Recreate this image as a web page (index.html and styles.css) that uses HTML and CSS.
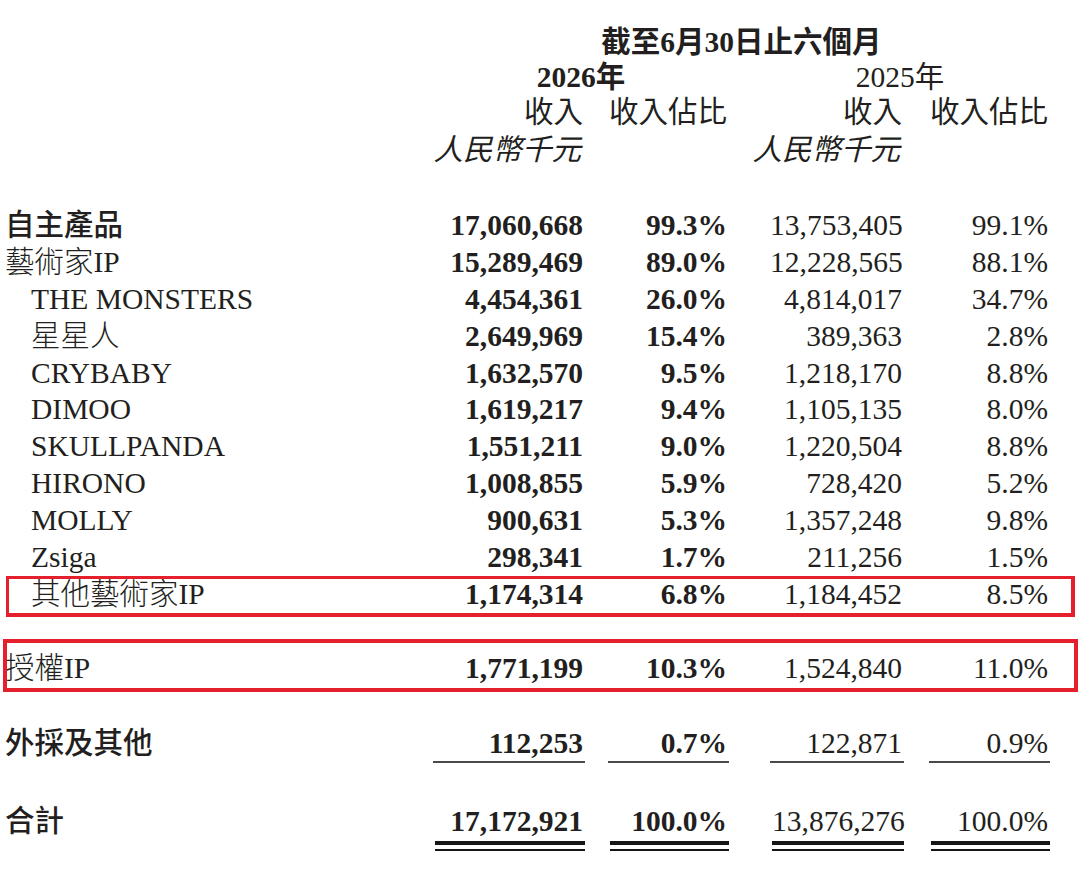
FILE: index.html
```html
<!DOCTYPE html>
<html lang="zh-Hant">
<head>
<meta charset="utf-8">
<title>收入明細</title>
<link rel="stylesheet" href="styles.css">
</head>
<body>
<div class="sheet">
  <div class="head">
    <div class="title">截至6月30日止六個月</div>
    <div class="yr yr26">2026年</div>
    <div class="yr yr25">2025年</div>
    <div class="hc k1">收入</div>
    <div class="hc k2">收入佔比</div>
    <div class="hc k3">收入</div>
    <div class="hc k4">收入佔比</div>
    <div class="unit k1">人民幣千元</div>
    <div class="unit k3">人民幣千元</div>
  </div>

  <div class="group">
    <div class="row"><div class="lab strong">自主產品</div><div class="c k1"><div class="v b">17,060,668</div></div><div class="c k2"><div class="v b">99.3%</div></div><div class="c k3"><div class="v">13,753,405</div></div><div class="c k4"><div class="v">99.1%</div></div></div>
    <div class="row"><div class="lab">藝術家IP</div><div class="c k1"><div class="v b">15,289,469</div></div><div class="c k2"><div class="v b">89.0%</div></div><div class="c k3"><div class="v">12,228,565</div></div><div class="c k4"><div class="v">88.1%</div></div></div>
    <div class="row"><div class="lab sub">THE MONSTERS</div><div class="c k1"><div class="v b">4,454,361</div></div><div class="c k2"><div class="v b">26.0%</div></div><div class="c k3"><div class="v">4,814,017</div></div><div class="c k4"><div class="v">34.7%</div></div></div>
    <div class="row"><div class="lab sub">星星人</div><div class="c k1"><div class="v b">2,649,969</div></div><div class="c k2"><div class="v b">15.4%</div></div><div class="c k3"><div class="v">389,363</div></div><div class="c k4"><div class="v">2.8%</div></div></div>
    <div class="row"><div class="lab sub">CRYBABY</div><div class="c k1"><div class="v b">1,632,570</div></div><div class="c k2"><div class="v b">9.5%</div></div><div class="c k3"><div class="v">1,218,170</div></div><div class="c k4"><div class="v">8.8%</div></div></div>
    <div class="row"><div class="lab sub">DIMOO</div><div class="c k1"><div class="v b">1,619,217</div></div><div class="c k2"><div class="v b">9.4%</div></div><div class="c k3"><div class="v">1,105,135</div></div><div class="c k4"><div class="v">8.0%</div></div></div>
    <div class="row"><div class="lab sub">SKULLPANDA</div><div class="c k1"><div class="v b">1,551,211</div></div><div class="c k2"><div class="v b">9.0%</div></div><div class="c k3"><div class="v">1,220,504</div></div><div class="c k4"><div class="v">8.8%</div></div></div>
    <div class="row"><div class="lab sub">HIRONO</div><div class="c k1"><div class="v b">1,008,855</div></div><div class="c k2"><div class="v b">5.9%</div></div><div class="c k3"><div class="v">728,420</div></div><div class="c k4"><div class="v">5.2%</div></div></div>
    <div class="row"><div class="lab sub">MOLLY</div><div class="c k1"><div class="v b">900,631</div></div><div class="c k2"><div class="v b">5.3%</div></div><div class="c k3"><div class="v">1,357,248</div></div><div class="c k4"><div class="v">9.8%</div></div></div>
    <div class="row"><div class="lab sub">Zsiga</div><div class="c k1"><div class="v b">298,341</div></div><div class="c k2"><div class="v b">1.7%</div></div><div class="c k3"><div class="v">211,256</div></div><div class="c k4"><div class="v">1.5%</div></div></div>
    <div class="row mark mark1"><div class="lab sub">其他藝術家IP</div><div class="c k1"><div class="v b">1,174,314</div></div><div class="c k2"><div class="v b">6.8%</div></div><div class="c k3"><div class="v">1,184,452</div></div><div class="c k4"><div class="v">8.5%</div></div></div>
  </div>

  <div class="row mark mark2 licensed"><div class="lab">授權IP</div><div class="c k1"><div class="v b">1,771,199</div></div><div class="c k2"><div class="v b">10.3%</div></div><div class="c k3"><div class="v">1,524,840</div></div><div class="c k4"><div class="v">11.0%</div></div></div>

  <div class="row other"><div class="lab strong">外採及其他</div><div class="c k1"><div class="v b ul">112,253</div></div><div class="c k2"><div class="v b ul">0.7%</div></div><div class="c k3"><div class="v ul">122,871</div></div><div class="c k4"><div class="v ul">0.9%</div></div></div>

  <div class="row total"><div class="lab strong">合計</div><div class="c k1"><div class="v b dbl"><div class="t">17,172,921</div></div></div><div class="c k2"><div class="v b dbl"><div class="t">100.0%</div></div></div><div class="c k3"><div class="v dbl"><div class="t">13,876,276</div></div></div><div class="c k4"><div class="v dbl"><div class="t">100.0%</div></div></div></div>
</div>
</body>
</html>
```

FILE: styles.css
```css
html, body {
  margin: 0;
  padding: 0;
  background: #ffffff;
}

body {
  width: 1080px;
  height: 871px;
  overflow: hidden;
  color: #231f20;
  font-family: "Liberation Serif", "Noto Sans CJK TC", serif;
  font-size: 29.5px;
}

.sheet {
  padding-top: 25px;
}

/* ---------- header ---------- */
.head {
  display: grid;
  grid-template-columns: 433px 152px 144px 175px 146px;
  grid-template-rows: 35px 35px 35px 41px;
  line-height: 35px;
  white-space: nowrap;
}

.title {
  grid-column: 2 / 6;
  grid-row: 1;
  text-align: center;
  font-weight: 700;
}

.yr {
  grid-row: 2;
  text-align: center;
}

.yr26 {
  grid-column: 2 / 4;
  font-weight: 700;
}

.yr25 {
  grid-column: 4 / 6;
  padding-left: 21px;
}

.hc {
  grid-row: 3;
  text-align: right;
  padding-right: 2px;
}

.unit {
  grid-row: 4;
  line-height: 41px;
  text-align: right;
  font-style: italic;
  padding-right: 4px;
}

.head .k1 { grid-column: 2; }
.head .k2 { grid-column: 3; }
.head .k3 { grid-column: 4; }
.head .k4 { grid-column: 5; }

/* ---------- body rows ---------- */
.group {
  margin-top: 36px;
}

.row {
  display: grid;
  grid-template-columns: 433px 152px 144px 175px 146px;
  height: 36.9px;
  line-height: 36.9px;
  white-space: nowrap;
  position: relative;
}

.lab {
  padding-left: 5px;
  font-weight: 300;
}

.lab.sub {
  padding-left: 31px;
}

.lab.strong {
  font-weight: 500;
}

.c {
  display: flex;
  justify-content: flex-end;
}

.v {
  text-align: right;
  padding-right: 2px;
}

.v.b {
  font-weight: 700;
}

.k1 .v { width: 150px; }
.k2 .v { width: 119px; }
.k3 .v { width: 132px; }
.k4 .v { width: 119px; }

/* highlight boxes drawn over the rows */
.mark::before {
  content: "";
  position: absolute;
  border: 3px solid #e3202b;
  pointer-events: none;
}

.mark1::before {
  left: 6px;
  right: 5px;
  top: 0;
  bottom: -4px;
  border-width: 3px 4px 4px 3px;
}

.licensed {
  margin-top: 37px;
}

.mark2::before {
  left: 3px;
  right: 2px;
  top: -11px;
  bottom: -5px;
  border-width: 4px;
}

.other {
  margin-top: 38px;
  height: auto;
}

.v.ul {
  height: 35.9px;
  border-bottom: 2px solid #4a4a4a;
}

.total {
  margin-top: 40px;
  height: auto;
}

.v.dbl {
  padding-right: 0;
  padding-bottom: 4px;
  border-bottom: 2px solid #161616;
}

.v.dbl .t {
  padding-right: 2px;
  height: 38px;
  border-bottom: 4px solid #161616;
}
```
